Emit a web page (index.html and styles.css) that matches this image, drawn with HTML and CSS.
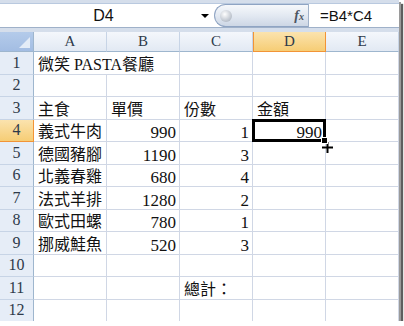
FILE: index.html
```html
<!DOCTYPE html>
<html lang="zh-Hant">
<head>
    <meta charset="UTF-8">
    <title>微笑 PASTA餐廳</title>
    <link rel="stylesheet" href="styles.css">
</head>
<body>
    <div class="window">
        <div class="formula-bar">
            <div class="name-box">
                <span class="name">D4</span>
                <span class="arrow"></span>
            </div>
            <div class="pill">
                <span class="knob"></span>
                <span class="fx">f<small>x</small></span>
            </div>
            <div class="formula">=B4*C4</div>
        </div>

        <div class="sheet">
            <div class="corner"><span class="tri"></span></div>
            <div class="col-head">A</div>
            <div class="col-head">B</div>
            <div class="col-head">C</div>
            <div class="col-head selected">D</div>
            <div class="col-head">E</div>

            <div class="row-head">1</div>
            <div class="cell wide">微笑 PASTA餐廳</div>
            <div class="cell"></div>
            <div class="cell"></div>
            <div class="cell"></div>

            <div class="row-head">2</div>
            <div class="cell"></div><div class="cell"></div><div class="cell"></div><div class="cell"></div><div class="cell"></div>

            <div class="row-head">3</div>
            <div class="cell">主食</div>
            <div class="cell">單價</div>
            <div class="cell">份數</div>
            <div class="cell">金額</div>
            <div class="cell"></div>

            <div class="row-head selected">4</div>
            <div class="cell">義式牛肉</div>
            <div class="cell num">990</div>
            <div class="cell num">1</div>
            <div class="cell num active">990</div>
            <div class="cell"></div>

            <div class="row-head">5</div>
            <div class="cell">德國豬腳</div>
            <div class="cell num">1190</div>
            <div class="cell num">3</div>
            <div class="cell"></div><div class="cell"></div>

            <div class="row-head">6</div>
            <div class="cell">北義春雞</div>
            <div class="cell num">680</div>
            <div class="cell num">4</div>
            <div class="cell"></div><div class="cell"></div>

            <div class="row-head">7</div>
            <div class="cell">法式羊排</div>
            <div class="cell num">1280</div>
            <div class="cell num">2</div>
            <div class="cell"></div><div class="cell"></div>

            <div class="row-head">8</div>
            <div class="cell">歐式田螺</div>
            <div class="cell num">780</div>
            <div class="cell num">1</div>
            <div class="cell"></div><div class="cell"></div>

            <div class="row-head">9</div>
            <div class="cell">挪威鮭魚</div>
            <div class="cell num">520</div>
            <div class="cell num">3</div>
            <div class="cell"></div><div class="cell"></div>

            <div class="row-head">10</div>
            <div class="cell"></div><div class="cell"></div><div class="cell"></div><div class="cell"></div><div class="cell"></div>

            <div class="row-head">11</div>
            <div class="cell"></div>
            <div class="cell"></div>
            <div class="cell">總計：</div>
            <div class="cell"></div>
            <div class="cell"></div>

            <div class="row-head">12</div>
            <div class="cell"></div><div class="cell"></div><div class="cell"></div><div class="cell"></div><div class="cell"></div>

            <svg class="cursor" width="13" height="13" viewBox="0 0 13 13">
                <path d="M5 0h3v5h5v3H8v5H5V8H0V5h5z" fill="#fff"/>
                <path d="M5.5 1h2v4.5H12v2H7.5V12h-2V7.5H1v-2h4.5z" fill="#000"/>
            </svg>
        </div>
    </div>
</body>
</html>
```

FILE: styles.css
```css
body {
    margin: 0;
    background: #fff;
}
.window {
    width: 399px;
    height: 321px;
    background: #d5deeb;
    box-shadow: 2px 2px 0 #9a9a9a, 4px 4px 1px #5e5e5e;
    overflow: hidden;
}

/* formula bar */
.formula-bar {
    display: flex;
    height: 23px;
    margin-top: 3px;
    background: #fff;
    border-top: 1px solid #b9c9df;
    border-bottom: 1px solid #9fb1c9;
    font-family: "Liberation Sans", Arial, sans-serif;
    color: #111;
}
.name-box {
    width: 214px;
    display: flex;
    align-items: center;
}
.name {
    flex: 1;
    text-align: center;
    font-size: 16px;
    padding-left: 6px;
}
.arrow {
    width: 0;
    height: 0;
    margin-right: 5px;
    border-left: 4px solid transparent;
    border-right: 4px solid transparent;
    border-top: 4px solid #000;
}
.pill {
    width: 94px;
    display: flex;
    align-items: center;
    justify-content: space-between;
    padding: 0 4px 0 5px;
    box-sizing: border-box;
    border: 1px solid #8fa4c3;
    border-right: none;
    border-radius: 12px 0 0 12px;
    background: linear-gradient(#f6f8fb, #e3e9f2 50%, #cdd7e5);
}
.knob {
    width: 12px;
    height: 12px;
    border-radius: 50%;
    background: radial-gradient(circle at 40% 35%, #ffffff, #c3c9d2 60%, #9ea7b4);
}
.fx {
    font-family: "Liberation Serif", serif;
    font-style: italic;
    font-weight: bold;
    font-size: 14px;
    color: #4d5562;
}
.fx small {
    font-size: 10px;
}
.formula {
    flex: 1;
    border-left: 1px solid #9fb1c9;
    padding-left: 11px;
    font-size: 15px;
    line-height: 23px;
}

/* grid */
.sheet {
    position: relative;
    margin-top: 4px;
    display: grid;
    grid-template-columns: 34px repeat(5, 73px);
    grid-template-rows: 20px repeat(12, 22.5px);
    background: #fff;
}
.corner {
    position: relative;
    background: linear-gradient(#b4cbea, #a3bde3);
    border-right: 1px solid #9eb6ce;
    border-bottom: 1px solid #9eb6ce;
    box-sizing: border-box;
}
.tri {
    position: absolute;
    right: 3px;
    bottom: 3px;
    width: 0;
    height: 0;
    border-left: 11px solid transparent;
    border-bottom: 11px solid #e4ecf7;
}
.col-head, .row-head {
    box-sizing: border-box;
    background: linear-gradient(#f4f7fc, #e2e9f3);
    color: #2e3a4a;
    font-family: "Liberation Serif", serif;
    display: flex;
    align-items: center;
    justify-content: center;
}
.col-head {
    font-size: 15px;
    border-right: 1px solid #c7d4e6;
    border-bottom: 1px solid #9eb6ce;
}
.row-head {
    font-size: 16px;
    border-right: 1px solid #9eb6ce;
    border-bottom: 1px solid #c7d4e6;
    background: #e6edf7;
}
.col-head.selected, .row-head.selected {
    background: linear-gradient(#fbe3ae, #f6cd75);
    border-color: #f29436;
}
.col-head.selected {
    border-left: 1px solid #f29436;
}

.cell {
    box-sizing: border-box;
    border-right: 1px solid #d0d7e5;
    border-bottom: 1px solid #d0d7e5;
    display: flex;
    align-items: flex-end;
    padding: 0 3px 1px 4px;
    white-space: nowrap;
    font-family: "Liberation Serif", "Noto Sans CJK TC", serif;
    font-size: 16px;
    line-height: 17px;
    color: #111;
}
.cell.wide {
    grid-column: span 2;
}
.cell.num {
    justify-content: flex-end;
    font-size: 17px;
    padding-bottom: 0;
}
.cell.active {
    position: relative;
    padding-right: 3px;
}
.cell.active::after {
    content: "";
    position: absolute;
    left: -1px;
    top: -1px;
    right: -1px;
    bottom: -1px;
    border: 3px solid #000;
}
.cell.active::before {
    content: "";
    position: absolute;
    right: -3px;
    bottom: -3px;
    width: 5px;
    height: 5px;
    background: #000;
    border: 1px solid #fff;
    z-index: 1;
}
.cursor {
    position: absolute;
    left: 321px;
    top: 109px;
}
```
